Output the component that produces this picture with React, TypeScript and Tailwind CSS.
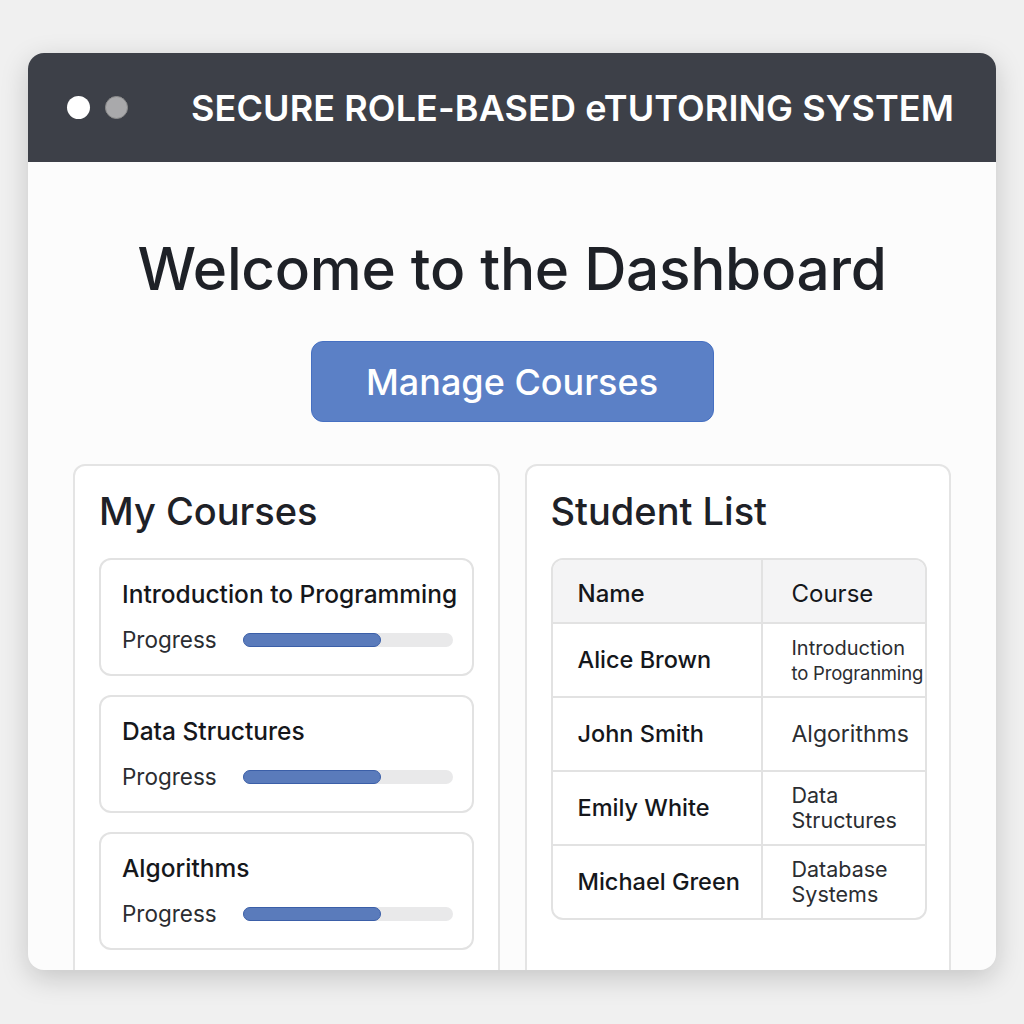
import React from 'react'

const FONT = { fontFamily: 'Inter, "Noto Sans", "Liberation Sans", sans-serif' }

const courses = [
  { title: 'Introduction to Programming', pct: 66 },
  { title: 'Data Structures', pct: 66 },
  { title: 'Algorithms', pct: 66 },
]

const students: { name: string; course: { text: string; size: string }[] }[] = [
  {
    name: 'Alice Brown',
    course: [
      { text: 'Introduction', size: 'text-[20px] leading-[25px]' },
      { text: 'to Progranming', size: 'text-[18.5px] leading-[24px] tracking-[-0.2px]' },
    ],
  },
  { name: 'John Smith', course: [{ text: 'Algorithms', size: 'text-[23px] leading-[26px]' }] },
  {
    name: 'Emily White',
    course: [
      { text: 'Data', size: 'text-[21.5px] leading-[25px]' },
      { text: 'Structures', size: 'text-[21.5px] leading-[25px]' },
    ],
  },
  {
    name: 'Michael Green',
    course: [
      { text: 'Database', size: 'text-[21.5px] leading-[25px]' },
      { text: 'Systems', size: 'text-[21.5px] leading-[25px]' },
    ],
  },
]

function CourseCard({ title, pct }: { title: string; pct: number }) {
  return (
    <div className="rounded-[12px] border-2 border-[#e2e2e2] bg-white pl-[21px] pr-[19px] pt-[18px] pb-[20px]">
      <div className="text-[24.5px] font-medium leading-[32px] text-[#15171b] whitespace-nowrap">{title}</div>
      <div className="mt-[16px] flex items-center">
        <div className="w-[121px] text-[22.5px] leading-[28px] text-[#2b2d31]">Progress</div>
        <div className="h-[14px] flex-1 rounded-full bg-[#e9e9ea]">
          <div
            className="h-full rounded-full border border-[#3b5fa8] bg-[#5a7bbb]"
            style={{ width: `${pct}%` }}
          />
        </div>
      </div>
    </div>
  )
}

export default function App() {
  return (
    <div className="min-h-screen bg-[#f0f0f0] px-[28px] pt-[53px]" style={FONT}>
      <div className="h-[917px] overflow-hidden rounded-[16px] bg-[#fcfcfc] shadow-[0_8px_28px_rgba(0,0,0,0.18)]">
        {/* title bar */}
        <div className="flex h-[109px] items-center bg-[#3d4048] pl-[39px]">
          <div className="h-[23px] w-[23px] rounded-full bg-white" />
          <div className="ml-[15px] h-[23px] w-[23px] rounded-full border border-[#8c8c8c] bg-[#a9a9ab]" />
          <div className="ml-[63px] text-[36px] font-semibold tracking-[0.1px] text-white whitespace-nowrap">
            SECURE ROLE-BASED eTUTORING SYSTEM
          </div>
        </div>

        {/* body */}
        <div className="flex flex-col items-center px-[45px] pt-[72px]">
          <h1 className="text-[58.5px] font-medium leading-[70px] tracking-[-0.3px] text-[#1e2127]">
            Welcome to the Dashboard
          </h1>
          <button className="mt-[37px] flex h-[81px] w-[403px] items-center justify-center rounded-[12px] border border-[#4670c2] bg-[#5b80c6] text-[36px] font-medium text-white">
            Manage Courses
          </button>

          <div className="mt-[42px] grid w-full grid-cols-2 gap-[25px]">
            {/* My Courses */}
            <div className="h-[520px] rounded-[12px] border-2 border-[#e4e4e4] bg-white px-[24px] pt-[22px]">
              <h2 className="text-[38px] font-medium leading-[46px] text-[#1e2127]">My Courses</h2>
              <div className="mt-[24px] flex flex-col gap-[19px]">
                {courses.map((c) => (
                  <CourseCard key={c.title} {...c} />
                ))}
              </div>
            </div>

            {/* Student List */}
            <div className="h-[520px] rounded-[12px] border-2 border-[#e4e4e4] bg-white pl-[24px] pr-[22px] pt-[22px]">
              <h2 className="text-[38px] font-medium leading-[46px] text-[#1e2127]">Student List</h2>
              <div className="mt-[24px] overflow-hidden rounded-[12px] border-2 border-[#e2e2e2]">
                <div className="grid h-[62px] grid-cols-[210px_1fr] bg-[#f4f4f5] text-[24px] text-[#15171b]">
                  <div className="flex items-center border-r-2 border-[#e2e2e2] pl-[25px] pt-[6px] font-medium">Name</div>
                  <div className="flex items-center pl-[29px] pt-[6px]">Course</div>
                </div>
                {students.map((s) => (
                  <div
                    key={s.name}
                    className="grid h-[74px] grid-cols-[210px_1fr] border-t-2 border-[#e2e2e2]"
                  >
                    <div className="flex items-center border-r-2 border-[#e2e2e2] pl-[25px] text-[23.5px] font-medium text-[#15171b] whitespace-nowrap">
                      {s.name}
                    </div>
                    <div className="flex flex-col justify-center overflow-hidden pl-[29px] text-[#2b2d31] whitespace-nowrap">
                      {s.course.map((line) => (
                        <div key={line.text} className={line.size}>
                          {line.text}
                        </div>
                      ))}
                    </div>
                  </div>
                ))}
              </div>
            </div>
          </div>
        </div>
      </div>
    </div>
  )
}
